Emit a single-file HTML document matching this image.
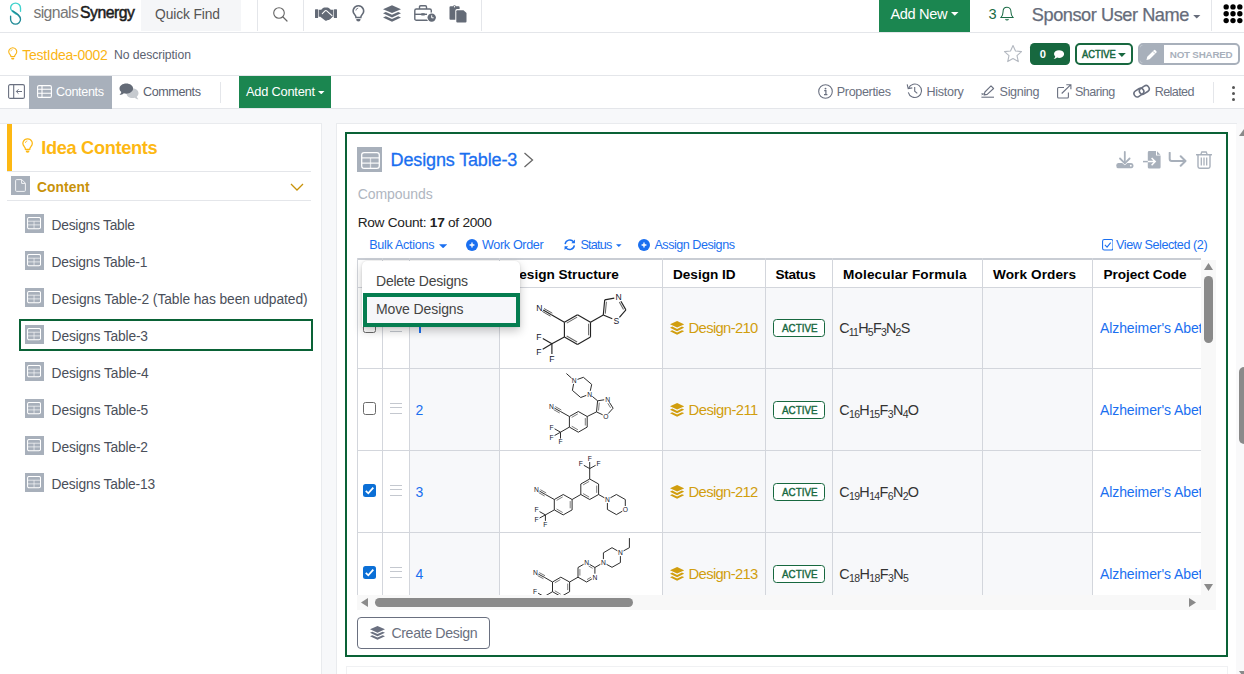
<!DOCTYPE html>
<html><head><meta charset="utf-8">
<style>
*{box-sizing:border-box;margin:0;padding:0}
html,body{width:1244px;height:674px;overflow:hidden;background:#f7f8fa;font-family:"Liberation Sans",sans-serif;color:#444;}
.abs{position:absolute}
.bar{position:absolute;left:0;width:1244px;background:#fff;border-bottom:1px solid #e4e6ea}
.vd{position:absolute;width:1px;background:#e4e6ea}
.t{position:absolute;white-space:nowrap;line-height:1}
.ibox{position:absolute;background:#a8b0bb}
#tbl{position:absolute;left:357px;top:258px;width:844px;height:337px;overflow:hidden;background:#fff}
.cv{position:absolute;top:0;width:1px;height:400px;background:#d3d6dc}
.rh{position:absolute;left:0;width:844px;height:1px;background:#d3d6dc}
.gc{position:absolute;background:#f7f8fa}
.act{position:absolute;width:52.5px;height:18px;border:1px solid #17683f;border-radius:3.5px;background:#fff}
.mf sub{font-size:10.5px;vertical-align:baseline;position:relative;top:2.6px}
.cb{position:absolute;width:13px;height:13px;border:1.3px solid #6b6b6b;border-radius:2.5px;background:#fff}
.cbc{position:absolute;width:13px;height:13px;border-radius:2.5px;background:#0b6fd6}
.hd{position:absolute;width:12.2px;height:10.5px;border-top:1.6px solid #c4c8cf;border-bottom:1.6px solid #c4c8cf}
.hd:after{content:"";position:absolute;left:0;top:2.85px;width:12.2px;height:1.6px;background:#c4c8cf}
</style></head><body>

<div class="bar" style="top:0;height:33px"></div>
<svg class="abs" style="left:9px;top:2px" width="14" height="24" viewBox="9 2 14 24" fill="none" stroke-width="1.35" stroke-linecap="round"><path d="M20.5 11.2 V8 A4.95 4.95 0 0 0 10.6 8 C10.6 10.5 12.5 11.8 16.2 14.3" stroke="#3fd2cd"/><path d="M12.6 10.9 C17.5 14 20.5 15.8 20.5 19.2 A4.95 4.95 0 0 1 10.6 19.2 V16.3" stroke="#1f8a96"/></svg>
<div class="t" style="left:33.5px;top:5.00px;font-size:15.8px;color:#777;font-weight:normal;letter-spacing:-0.648px;">signals</div>
<div class="t" style="left:80.1px;top:5.00px;font-size:15.8px;color:#1c1c1c;font-weight:normal;letter-spacing:-0.509px;-webkit-text-stroke:0.5px #1c1c1c;">Synergy</div>
<div class="abs" style="left:141px;top:0;width:100px;height:31px;background:#f5f6f8"></div>
<div class="t" style="left:155px;top:8.00px;font-size:13.8px;color:#555;font-weight:normal;letter-spacing:-0.106px;">Quick Find</div>
<div class="vd" style="left:257px;top:0;height:31px"></div>
<svg class="abs" style="left:272px;top:6px" width="17" height="17" viewBox="0 0 17 17"><circle cx="7" cy="7" r="5.3" fill="none" stroke="#666" stroke-width="1.1"/><path d="M11 11 L15 15" stroke="#666" stroke-width="1.2" stroke-linecap="round"/></svg>
<div class="vd" style="left:303px;top:0;height:31px"></div>
<svg class="abs" style="left:315px;top:6.5px" width="22" height="14" viewBox="0 0 22 14"><g fill="#646b77"><rect x="0" y="2.3" width="3.1" height="8.6" rx="0.5"/><rect x="18.9" y="2.3" width="3.1" height="8.6" rx="0.5"/><path d="M3.7 2.8 H6.2 L8 1 Q8.6 0.5 9.4 0.5 H12.6 Q13.3 0.5 13.9 0.9 L15.8 2.8 H18.3 V9.8 H17.2 Q17.3 11 16.2 11.1 Q16 12.3 14.7 12.2 Q14.2 13.4 12.8 13 Q11.3 14.3 9.8 13.2 L5.3 9.8 H3.7 Z"/></g><path d="M7.3 6.6 L10.3 3.7 Q11 3.2 11.7 3.8 L17 8.6" stroke="#fff" stroke-width="1.1" fill="none" stroke-linecap="round"/></svg>
<svg class="abs" style="left:352.3px;top:5px" width="12.8" height="17.8" viewBox="0 0 12 17"><path d="M6 0.8 A4.9 4.9 0 0 0 2.4 9.1 C3.2 10 3.7 10.9 3.7 12 H8.3 C8.3 10.9 8.8 10 9.6 9.1 A4.9 4.9 0 0 0 6 0.8 Z" fill="none" stroke="#646b77" stroke-width="1.5"/><path d="M3.9 13.4 H8.1 L7.6 15.3 Q6 16.2 4.4 15.3 Z" fill="#646b77"/><path d="M3.6 5.3 A2.5 2.5 0 0 1 5.8 3" fill="none" stroke="#646b77" stroke-width="0.8"/></svg>
<svg class="abs" style="left:383px;top:5px" width="18" height="17" viewBox="0 0 14 13"><g fill="#646b77"><path d="M7 0 L14 3.1 L7 6.2 L0 3.1 Z"/><path d="M2.2 5.3 L0 6.3 L7 9.6 L14 6.3 L11.8 5.3 L7 7.5 Z"/><path d="M2.2 8.6 L0 9.6 L7 12.9 L14 9.6 L11.8 8.6 L7 10.8 Z"/></g></svg>
<svg class="abs" style="left:414px;top:5px" width="23" height="18" viewBox="0 0 23 18"><g fill="none" stroke="#646b77" stroke-width="1.4"><path d="M5.5 4 V2 Q5.5 0.8 6.7 0.8 H11.3 Q12.5 0.8 12.5 2 V4"/><rect x="0.8" y="4" width="16.5" height="11.3" rx="1.6"/><path d="M0.8 9.3 H13"/></g><rect x="7.3" y="8.2" width="3.4" height="2.3" fill="#646b77"/><circle cx="17.7" cy="12.6" r="5" fill="#fff"/><circle cx="17.7" cy="12.6" r="4.2" fill="#646b77"/><path d="M17.7 10.3 V12.8 H19.6" stroke="#fff" stroke-width="1" fill="none"/></svg>
<svg class="abs" style="left:449px;top:5px" width="18" height="18" viewBox="0 0 18 18"><g fill="#646b77"><path d="M1.5 1.2 H4 A1.6 1.6 0 0 1 7 1.2 H9.6 Q10.6 1.2 10.6 2.2 V4 H8 Q6.3 4 6.3 5.7 V14.8 H1.5 Q0.5 14.8 0.5 13.8 V2.2 Q0.5 1.2 1.5 1.2 Z"/><path d="M8.3 5.2 H14.5 L17.5 8 V16.5 Q17.5 17.5 16.5 17.5 H8.3 Q7.3 17.5 7.3 16.5 V6.2 Q7.3 5.2 8.3 5.2 Z"/></g><circle cx="5.5" cy="1.7" r="0.7" fill="#fff"/></svg>
<div class="vd" style="left:481px;top:0;height:31px"></div>
<div class="abs" style="left:879px;top:0;width:91px;height:32px;background:#1b8650"></div>
<div class="t" style="left:890.4px;top:7.00px;font-size:14.6px;color:#fff;font-weight:normal;letter-spacing:-0.336px;">Add New</div>
<svg class="abs" style="left:951.2px;top:12px" width="7.5" height="3.8" viewBox="0 0 10 5"><path d="M0 0 H10 L5 5 Z" fill="#fff"/></svg>
<div class="t" style="left:988.6px;top:7.00px;font-size:14.6px;color:#1a6b45;font-weight:normal;letter-spacing:0.000px;">3</div>
<svg class="abs" style="left:1000px;top:6px" width="14" height="16" viewBox="0 0 15 17"><path d="M7.5 1.2 C4.3 1.2 3.2 3.8 3.2 6.5 C3.2 9.5 2.4 10.8 1 12.3 H14 C12.6 10.8 11.8 9.5 11.8 6.5 C11.8 3.8 10.7 1.2 7.5 1.2 Z" fill="none" stroke="#1a6b45" stroke-width="1.1"/><path d="M6 13.8 A1.6 1.6 0 0 0 9 13.8" fill="none" stroke="#1a6b45" stroke-width="1.1"/></svg>
<div class="t" style="left:1031.8px;top:6.00px;font-size:18.2px;color:#666c7a;font-weight:normal;letter-spacing:-0.454px;-webkit-text-stroke:0.25px #666c7a;">Sponsor User Name</div>
<svg class="abs" style="left:1193.2px;top:15px" width="7.5" height="3.6" viewBox="0 0 10 5"><path d="M0 0 H10 L5 5 Z" fill="#666c7a"/></svg>
<div class="vd" style="left:1211px;top:0;height:31px"></div>
<svg class="abs" style="left:1222.5px;top:4.3px" width="20" height="19.5" viewBox="0 0 20 20"><g fill="#000"><circle cx="3" cy="3" r="2.75"/><circle cx="3" cy="10" r="2.75"/><circle cx="3" cy="17" r="2.75"/><circle cx="10" cy="3" r="2.75"/><circle cx="10" cy="10" r="2.75"/><circle cx="10" cy="17" r="2.75"/><circle cx="17" cy="3" r="2.75"/><circle cx="17" cy="10" r="2.75"/><circle cx="17" cy="17" r="2.75"/></g></svg>
<div class="bar" style="top:33px;height:43px"></div>
<svg class="abs" style="left:8.4px;top:47px" width="9.5" height="13.6" viewBox="0 0 12 17"><path d="M6 0.8 A4.9 4.9 0 0 0 2.4 9.1 C3.2 10 3.7 10.9 3.7 12 H8.3 C8.3 10.9 8.8 10 9.6 9.1 A4.9 4.9 0 0 0 6 0.8 Z" fill="none" stroke="#fab516" stroke-width="1.4"/><path d="M3.9 13.4 H8.1 L7.6 15.3 Q6 16.2 4.4 15.3 Z" fill="#fab516"/><path d="M3.6 5.3 A2.5 2.5 0 0 1 5.8 3" fill="none" stroke="#fab516" stroke-width="0.8"/></svg>
<div class="t" style="left:22.3px;top:48.00px;font-size:14px;color:#fab516;font-weight:normal;letter-spacing:-0.278px;">TestIdea-0002</div>
<div class="t" style="left:114px;top:49.00px;font-size:12.2px;color:#5b6270;font-weight:normal;letter-spacing:-0.070px;">No description</div>
<svg class="abs" style="left:1003px;top:44px" width="20" height="19" viewBox="0 0 20 19"><path d="M10 1.5 L12.5 7 L18.5 7.6 L14 11.7 L15.3 17.6 L10 14.6 L4.7 17.6 L6 11.7 L1.5 7.6 L7.5 7 Z" fill="none" stroke="#b3b8c0" stroke-width="1.1" stroke-linejoin="round"/></svg>
<div class="abs" style="left:1030px;top:43px;width:40px;height:22px;background:#17683f;border-radius:4.5px"></div>
<div class="t" style="left:1039.8px;top:49.00px;font-size:11.2px;color:#fff;font-weight:bold;letter-spacing:0.000px;">0</div>
<svg class="abs" style="left:1052.5px;top:50px" width="11.5" height="9.5" viewBox="0 0 12 10"><path d="M6.3 0.3 C3.3 0.3 1 2 1 4.2 C1 5.2 1.5 6.1 2.3 6.8 C2.2 7.8 1.6 8.6 0.6 9.4 C2.2 9.4 3.4 8.9 4.2 8 C4.9 8.2 5.6 8.3 6.3 8.3 C9.3 8.3 11.6 6.5 11.6 4.2 C11.6 2 9.3 0.3 6.3 0.3 Z" fill="#fff"/></svg>
<div class="abs" style="left:1075px;top:43px;width:58px;height:22px;border:2px solid #17683f;border-radius:5px;background:#fff"></div>
<div class="t" style="left:1082.4px;top:50.00px;font-size:10.4px;color:#17683f;font-weight:normal;letter-spacing:0.000px;-webkit-text-stroke:0.5px #17683f;transform-origin:0 50%;transform:scaleX(0.9006)">ACTIVE</div>
<svg class="abs" style="left:1118.2px;top:52.5px" width="7.8" height="4" viewBox="0 0 10 5"><path d="M0 0 H10 L5 5 Z" fill="#17683f"/></svg>
<div class="abs" style="left:1138px;top:43px;width:102px;height:22px;border:2px solid #a8b0bb;border-radius:5px;background:#fff;overflow:hidden"><div class="abs" style="left:0;top:0;width:24px;height:18px;background:#a8b0bb"></div></div>
<svg class="abs" style="left:1145.5px;top:48.6px" width="11.5" height="11.5" viewBox="0 0 12 12"><path d="M0.5 11.5 L1.3 8.2 L8.2 1.3 Q9 0.5 9.8 1.3 L10.7 2.2 Q11.5 3 10.7 3.8 L3.8 10.7 Z" fill="#fff"/><path d="M7.2 2.4 L9.6 4.8" stroke="#a8b0bb" stroke-width="0.8"/></svg>
<div class="t" style="left:1169.8px;top:50.00px;font-size:9.8px;color:#a8b0bb;font-weight:bold;letter-spacing:-0.209px;">NOT SHARED</div>
<div class="bar" style="top:76px;height:33px"></div>
<svg class="abs" style="left:8px;top:84px" width="17" height="15" viewBox="0 0 17 15"><rect x="0.6" y="0.6" width="15.8" height="13.8" rx="1.5" fill="none" stroke="#6a7080" stroke-width="1.1"/><path d="M5.7 0.6 V14.4" stroke="#6a7080" stroke-width="1.1"/><path d="M14 7.5 H8.5 M10.5 5.3 L8.3 7.5 L10.5 9.7" fill="none" stroke="#6a7080" stroke-width="1"/></svg>
<div class="abs" style="left:29px;top:76px;width:83px;height:33px;background:#a8b0bb"></div>
<svg class="abs" style="left:37px;top:85px" width="15" height="13" viewBox="0 0 15 13"><rect x="0.6" y="0.6" width="13.8" height="11.8" rx="1.4" fill="none" stroke="#fff" stroke-width="1.1"/><path d="M0.6 4.3 H14.4 M0.6 8.3 H14.4 M5 0.6 V12.4" stroke="#fff" stroke-width="1.1" fill="none"/></svg>
<div class="t" style="left:56px;top:86.00px;font-size:12.6px;color:#fff;font-weight:normal;letter-spacing:-0.344px;">Contents</div>
<svg class="abs" style="left:119px;top:83px" width="20" height="17" viewBox="0 0 20 17"><path d="M13.5 5.5 C17 5.5 19.5 7.6 19.5 10.2 C19.5 11.6 18.8 12.7 17.8 13.5 C18 14.6 18.6 15.5 19.5 16.2 C17.8 16.2 16.5 15.6 15.6 14.7 C14.9 14.9 14.2 15 13.5 15 C10 15 7.5 12.9 7.5 10.2 C7.5 7.6 10 5.5 13.5 5.5 Z" fill="#c6cacf"/><path d="M7.3 0.5 C3.5 0.5 0.5 2.8 0.5 5.6 C0.5 7 1.2 8.2 2.3 9.1 C2.1 10.2 1.4 11.2 0.5 11.9 C2.4 11.9 3.8 11.3 4.8 10.3 C5.6 10.6 6.4 10.7 7.3 10.7 C11.1 10.7 14.1 8.4 14.1 5.6 C14.1 2.8 11.1 0.5 7.3 0.5 Z" fill="#646b77"/></svg>
<div class="t" style="left:143px;top:86.00px;font-size:12.6px;color:#5b6270;font-weight:normal;letter-spacing:-0.413px;">Comments</div>
<div class="vd" style="left:220px;top:82px;height:21px"></div>
<div class="abs" style="left:239px;top:76px;width:92px;height:32px;background:#1b8650"></div>
<div class="t" style="left:246px;top:86.00px;font-size:12.8px;color:#fff;font-weight:normal;letter-spacing:-0.216px;">Add Content</div>
<svg class="abs" style="left:318px;top:91px" width="6.5" height="3.4" viewBox="0 0 10 5"><path d="M0 0 H10 L5 5 Z" fill="#fff"/></svg>
<svg class="abs" style="left:818px;top:84px" width="15" height="15" viewBox="0 0 15 15"><circle cx="7.5" cy="7.5" r="6.8" fill="none" stroke="#6a7080" stroke-width="1.1"/><circle cx="7.5" cy="4.6" r="0.95" fill="#6a7080"/><path d="M6.2 6.7 H7.9 V10.5 M6 10.6 H9.4" stroke="#6a7080" stroke-width="1.2" fill="none"/></svg>
<div class="t" style="left:836.8px;top:86.00px;font-size:12.6px;color:#6a7080;font-weight:normal;letter-spacing:-0.356px;">Properties</div>
<svg class="abs" style="left:906px;top:83px" width="17" height="16" viewBox="0 0 17 16"><path d="M2.6 5.2 A6.7 6.7 0 1 1 2.3 9.3" fill="none" stroke="#6a7080" stroke-width="1.1"/><path d="M1.2 1.3 L2.2 5.6 L6.3 4.9" fill="none" stroke="#6a7080" stroke-width="1.1"/><path d="M8.7 4 V8.3 L11.3 10.4" fill="none" stroke="#6a7080" stroke-width="1.1"/></svg>
<div class="t" style="left:926.6px;top:86.00px;font-size:12.6px;color:#6a7080;font-weight:normal;letter-spacing:-0.331px;">History</div>
<svg class="abs" style="left:981px;top:85px" width="14" height="13" viewBox="0 0 14 13"><path d="M10 0.9 L12.6 3.5 L6.2 9.4 L3.2 9.9 L3.9 7 Z" fill="none" stroke="#6a7080" stroke-width="1.1" stroke-linejoin="round"/><path d="M0.4 12.2 H13" stroke="#6a7080" stroke-width="1.1"/><path d="M0.6 8 L2.6 10.2 M2.6 8 L0.6 10.2" stroke="#6a7080" stroke-width="0.9"/></svg>
<div class="t" style="left:999.6px;top:86.00px;font-size:12.6px;color:#6a7080;font-weight:normal;letter-spacing:-0.353px;">Signing</div>
<svg class="abs" style="left:1057px;top:84px" width="15" height="15" viewBox="0 0 15 15"><path d="M7 3.5 H1.6 Q0.6 3.5 0.6 4.5 V13 Q0.6 14 1.6 14 H10.4 Q11.4 14 11.4 13 V8.5" fill="none" stroke="#6a7080" stroke-width="1.1"/><path d="M4.7 9.5 L13.6 0.9 M9.3 0.7 H13.9 V5.3" fill="none" stroke="#6a7080" stroke-width="1.1"/></svg>
<div class="t" style="left:1075px;top:86.00px;font-size:12.6px;color:#6a7080;font-weight:normal;letter-spacing:-0.537px;">Sharing</div>
<svg class="abs" style="left:1132px;top:84px" width="19" height="15" viewBox="0 0 19 15"><g fill="none" stroke="#6a7080" stroke-width="1.6"><rect x="-4.6" y="-3" width="10.4" height="6.4" rx="3.2" transform="translate(6.3 8.7) rotate(-33)"/><rect x="-5.2" y="-3.2" width="10.4" height="6.4" rx="3.2" transform="translate(12.3 5.9) rotate(-33)"/></g></svg>
<div class="t" style="left:1154.8px;top:86.00px;font-size:12.6px;color:#6a7080;font-weight:normal;letter-spacing:-0.637px;">Related</div>
<div class="vd" style="left:1213px;top:82px;height:21px"></div>
<div class="abs" style="left:1232px;top:86px;width:3px;height:3px;border-radius:50%;background:#555"></div>
<div class="abs" style="left:1232px;top:92px;width:3px;height:3px;border-radius:50%;background:#555"></div>
<div class="abs" style="left:1232px;top:98px;width:3px;height:3px;border-radius:50%;background:#555"></div>
<div class="abs" style="left:0;top:123px;width:322px;height:560px;background:#fff;border:1px solid #e9ebee;border-left:none"></div>
<div class="abs" style="left:7px;top:124px;width:5px;height:47px;background:#fdb813"></div>
<svg class="abs" style="left:22.3px;top:137.6px" width="11.2" height="16" viewBox="0 0 12 17"><path d="M6 0.8 A4.9 4.9 0 0 0 2.4 9.1 C3.2 10 3.7 10.9 3.7 12 H8.3 C8.3 10.9 8.8 10 9.6 9.1 A4.9 4.9 0 0 0 6 0.8 Z" fill="none" stroke="#fdb813" stroke-width="1.35"/><path d="M3.9 13.4 H8.1 L7.6 15.3 Q6 16.2 4.4 15.3 Z" fill="#fdb813"/><path d="M3.6 5.3 A2.5 2.5 0 0 1 5.8 3" fill="none" stroke="#fdb813" stroke-width="0.8"/></svg>
<div class="t" style="left:41.3px;top:139.00px;font-size:18.2px;color:#fdb813;font-weight:bold;letter-spacing:-0.330px;">Idea Contents</div>
<div class="abs" style="left:7px;top:171px;width:304px;height:1px;background:#e4e6ea"></div>
<div class="ibox" style="left:11px;top:176px;width:19px;height:19px"><svg class="abs" style="left:4px;top:3px" width="11" height="13" viewBox="0 0 11 13"><path d="M1.6 0.6 H6.8 L10.4 4.2 V11.4 Q10.4 12.4 9.4 12.4 H1.6 Q0.6 12.4 0.6 11.4 V1.6 Q0.6 0.6 1.6 0.6 Z M6.6 0.8 V4.4 H10.2" fill="none" stroke="#f2f3f5" stroke-width="1"/></svg></div>
<div class="t" style="left:36.9px;top:181.00px;font-size:13.8px;color:#c8920a;font-weight:bold;letter-spacing:0.098px;">Content</div>
<svg class="abs" style="left:290px;top:183px" width="14" height="8" viewBox="0 0 14 8"><path d="M1 1 L7 7 L13 1" fill="none" stroke="#c8920a" stroke-width="1.3"/></svg>
<div class="abs" style="left:7px;top:200px;width:304px;height:1px;background:#e4e6ea"></div>
<div class="ibox" style="left:25px;top:214px;width:19px;height:19px"><svg class="abs" style="left:2px;top:3.1px" width="14.2" height="12.5" viewBox="0 0 15 13" preserveAspectRatio="none"><rect x="0.6" y="0.5" width="13.7" height="11.7" rx="1.6" fill="none" stroke="#fff" stroke-width="1.1"/><path d="M1 4.4 H14 M1 8.2 H14" stroke="#fff" stroke-opacity="0.75" stroke-width="0.9" fill="none"/><path d="M7.45 4.4 V12" stroke="#fff" stroke-opacity="0.6" stroke-width="1.1" fill="none"/></svg></div>
<div class="t" style="left:51.6px;top:219.00px;font-size:13.8px;color:#4a4f5a;font-weight:normal;letter-spacing:-0.252px;">Designs Table</div>
<div class="ibox" style="left:25px;top:251px;width:19px;height:19px"><svg class="abs" style="left:2px;top:3.1px" width="14.2" height="12.5" viewBox="0 0 15 13" preserveAspectRatio="none"><rect x="0.6" y="0.5" width="13.7" height="11.7" rx="1.6" fill="none" stroke="#fff" stroke-width="1.1"/><path d="M1 4.4 H14 M1 8.2 H14" stroke="#fff" stroke-opacity="0.75" stroke-width="0.9" fill="none"/><path d="M7.45 4.4 V12" stroke="#fff" stroke-opacity="0.6" stroke-width="1.1" fill="none"/></svg></div>
<div class="t" style="left:51.6px;top:256.00px;font-size:13.8px;color:#4a4f5a;font-weight:normal;letter-spacing:-0.206px;">Designs Table-1</div>
<div class="ibox" style="left:25px;top:288px;width:19px;height:19px"><svg class="abs" style="left:2px;top:3.1px" width="14.2" height="12.5" viewBox="0 0 15 13" preserveAspectRatio="none"><rect x="0.6" y="0.5" width="13.7" height="11.7" rx="1.6" fill="none" stroke="#fff" stroke-width="1.1"/><path d="M1 4.4 H14 M1 8.2 H14" stroke="#fff" stroke-opacity="0.75" stroke-width="0.9" fill="none"/><path d="M7.45 4.4 V12" stroke="#fff" stroke-opacity="0.6" stroke-width="1.1" fill="none"/></svg></div>
<div class="t" style="left:51.6px;top:293.00px;font-size:13.8px;color:#4a4f5a;font-weight:normal;letter-spacing:-0.077px;">Designs Table-2 (Table has been udpated)</div>
<div class="ibox" style="left:25px;top:325px;width:19px;height:19px"><svg class="abs" style="left:2px;top:3.1px" width="14.2" height="12.5" viewBox="0 0 15 13" preserveAspectRatio="none"><rect x="0.6" y="0.5" width="13.7" height="11.7" rx="1.6" fill="none" stroke="#fff" stroke-width="1.1"/><path d="M1 4.4 H14 M1 8.2 H14" stroke="#fff" stroke-opacity="0.75" stroke-width="0.9" fill="none"/><path d="M7.45 4.4 V12" stroke="#fff" stroke-opacity="0.6" stroke-width="1.1" fill="none"/></svg></div>
<div class="t" style="left:51.6px;top:330.00px;font-size:13.8px;color:#4a4f5a;font-weight:normal;letter-spacing:-0.163px;">Designs Table-3</div>
<div class="ibox" style="left:25px;top:362px;width:19px;height:19px"><svg class="abs" style="left:2px;top:3.1px" width="14.2" height="12.5" viewBox="0 0 15 13" preserveAspectRatio="none"><rect x="0.6" y="0.5" width="13.7" height="11.7" rx="1.6" fill="none" stroke="#fff" stroke-width="1.1"/><path d="M1 4.4 H14 M1 8.2 H14" stroke="#fff" stroke-opacity="0.75" stroke-width="0.9" fill="none"/><path d="M7.45 4.4 V12" stroke="#fff" stroke-opacity="0.6" stroke-width="1.1" fill="none"/></svg></div>
<div class="t" style="left:51.6px;top:367.00px;font-size:13.8px;color:#4a4f5a;font-weight:normal;letter-spacing:-0.121px;">Designs Table-4</div>
<div class="ibox" style="left:25px;top:399px;width:19px;height:19px"><svg class="abs" style="left:2px;top:3.1px" width="14.2" height="12.5" viewBox="0 0 15 13" preserveAspectRatio="none"><rect x="0.6" y="0.5" width="13.7" height="11.7" rx="1.6" fill="none" stroke="#fff" stroke-width="1.1"/><path d="M1 4.4 H14 M1 8.2 H14" stroke="#fff" stroke-opacity="0.75" stroke-width="0.9" fill="none"/><path d="M7.45 4.4 V12" stroke="#fff" stroke-opacity="0.6" stroke-width="1.1" fill="none"/></svg></div>
<div class="t" style="left:51.6px;top:404.00px;font-size:13.8px;color:#4a4f5a;font-weight:normal;letter-spacing:-0.142px;">Designs Table-5</div>
<div class="ibox" style="left:25px;top:436px;width:19px;height:19px"><svg class="abs" style="left:2px;top:3.1px" width="14.2" height="12.5" viewBox="0 0 15 13" preserveAspectRatio="none"><rect x="0.6" y="0.5" width="13.7" height="11.7" rx="1.6" fill="none" stroke="#fff" stroke-width="1.1"/><path d="M1 4.4 H14 M1 8.2 H14" stroke="#fff" stroke-opacity="0.75" stroke-width="0.9" fill="none"/><path d="M7.45 4.4 V12" stroke="#fff" stroke-opacity="0.6" stroke-width="1.1" fill="none"/></svg></div>
<div class="t" style="left:51.6px;top:441.00px;font-size:13.8px;color:#4a4f5a;font-weight:normal;letter-spacing:-0.163px;">Designs Table-2</div>
<div class="ibox" style="left:25px;top:473px;width:19px;height:19px"><svg class="abs" style="left:2px;top:3.1px" width="14.2" height="12.5" viewBox="0 0 15 13" preserveAspectRatio="none"><rect x="0.6" y="0.5" width="13.7" height="11.7" rx="1.6" fill="none" stroke="#fff" stroke-width="1.1"/><path d="M1 4.4 H14 M1 8.2 H14" stroke="#fff" stroke-opacity="0.75" stroke-width="0.9" fill="none"/><path d="M7.45 4.4 V12" stroke="#fff" stroke-opacity="0.6" stroke-width="1.1" fill="none"/></svg></div>
<div class="t" style="left:51.6px;top:478.00px;font-size:13.8px;color:#4a4f5a;font-weight:normal;letter-spacing:-0.184px;">Designs Table-13</div>
<div class="abs" style="left:19px;top:319px;width:294px;height:32px;border:2px solid #0a6236"></div>
<div class="abs" style="left:336px;top:123px;width:901px;height:560px;background:#fff;border:1px solid #e9ebee"></div>
<div class="abs" style="left:345px;top:132px;width:883px;height:525px;border:2px solid #0a6236;background:#fff"></div>
<div class="ibox" style="left:357px;top:147px;width:25px;height:25px"><svg class="abs" style="left:3.5px;top:4.5px" width="19" height="17" viewBox="0 0 19 17"><rect x="0.7" y="0.7" width="17.6" height="15.6" rx="2.4" fill="none" stroke="#fff" stroke-width="1.3"/><path d="M1 5.9 H18 M1 11.1 H18" stroke="#fff" stroke-opacity="0.9" stroke-width="1.1" fill="none"/><path d="M9.5 5.9 V16" stroke="#fff" stroke-opacity="0.65" stroke-width="1.3" fill="none"/></svg></div>
<div class="t" style="left:390.6px;top:151.00px;font-size:18px;color:#1a6ff0;font-weight:normal;letter-spacing:-0.146px;-webkit-text-stroke:0.3px #1a6ff0;">Designs Table-3</div>
<svg class="abs" style="left:523px;top:152px" width="11" height="16" viewBox="0 0 11 16"><path d="M1.5 1 L9.5 8 L1.5 15" fill="none" stroke="#666" stroke-width="1.3"/></svg>
<div class="t" style="left:357.7px;top:187.00px;font-size:14px;color:#b0b6bf;font-weight:normal;letter-spacing:-0.050px;">Compounds</div>
<div class="t" style="left:357.7px;top:216.00px;font-size:13.7px;color:#222;font-weight:normal;letter-spacing:-0.287px;">Row Count: <b>17</b> of 2000</div>
<svg class="abs" style="left:1116px;top:151px" width="18" height="18" viewBox="0 0 18 18"><g fill="none" stroke="#a8b0bb" stroke-width="1.8" stroke-linecap="round"><path d="M8.8 0.9 V12"/><path d="M4 7.5 L8.8 12.3 L13.6 7.5"/></g><path d="M2.3 12 H6.2 L8.8 14.3 L11.4 12 H15.3 Q17.5 12 17.5 14.6 Q17.5 17.3 15.3 17.3 H2.3 Q0.2 17.3 0.2 14.6 Q0.2 12 2.3 12 Z" fill="#a8b0bb"/><circle cx="14.8" cy="14.7" r="0.9" fill="#fff"/></svg>
<svg class="abs" style="left:1142px;top:151px" width="20" height="18" viewBox="0 0 20 18"><path d="M7.2 0 H14 V4.6 H18.6 V16.2 Q18.6 17.6 17.2 17.6 H7.2 Q5.8 17.6 5.8 16.2 V1.4 Q5.8 0 7.2 0 Z M15 0.2 L18.5 3.7 H15 Z" fill="#a8b0bb"/><path d="M1 10.6 H12.8 M9.6 7 L13.2 10.6 L9.6 14.2" fill="none" stroke="#fff" stroke-width="1.5"/><path d="M1 10.6 H5.8" stroke="#a8b0bb" stroke-width="1.5"/></svg>
<svg class="abs" style="left:1168px;top:152px" width="19" height="15" viewBox="0 0 19 15"><path d="M1.7 0.8 V7 Q1.7 9 3.7 9 H17.3 M12.7 4.2 L17.5 9 L12.7 13.8" fill="none" stroke="#a8b0bb" stroke-width="2" stroke-linecap="round" stroke-linejoin="round"/></svg>
<svg class="abs" style="left:1196px;top:151px" width="16" height="18" viewBox="0 0 16 18"><g fill="none" stroke="#a8b0bb"><path d="M0.5 3.7 H15.5" stroke-width="1.5" stroke-linecap="round"/><path d="M4.8 3.4 L5.8 1 H10.2 L11.2 3.4" stroke-width="1.3"/><path d="M2 4 V15.5 Q2 17.2 3.7 17.2 H12.3 Q14 17.2 14 15.5 V4" stroke-width="1.4"/><path d="M5.3 6.5 V14.5 M8 6.5 V14.5 M10.7 6.5 V14.5" stroke-width="1.3"/></g></svg>
<div class="t" style="left:369.2px;top:239.00px;font-size:12.6px;color:#1a6ff0;font-weight:normal;letter-spacing:-0.301px;">Bulk Actions</div>
<svg class="abs" style="left:439px;top:243.6px" width="8.2" height="4.5" viewBox="0 0 10 5"><path d="M0 0 H10 L5 5 Z" fill="#1a6ff0"/></svg>
<svg class="abs" style="left:466px;top:239px" width="12" height="12" viewBox="0 0 12 12"><circle cx="6" cy="6" r="6" fill="#1a6ff0"/><path d="M6 3.6 V8.4 M3.6 6 H8.4" stroke="#fff" stroke-width="1.35"/></svg>
<div class="t" style="left:482px;top:239.00px;font-size:12.6px;color:#1a6ff0;font-weight:normal;letter-spacing:-0.351px;">Work Order</div>
<svg class="abs" style="left:564.3px;top:239.4px" width="11.5" height="11.5" viewBox="0 0 12 12"><g fill="none" stroke="#1a6ff0" stroke-width="1.5"><path d="M1.2 5.3 A4.9 4.9 0 0 1 10 3"/><path d="M10.8 6.7 A4.9 4.9 0 0 1 2 9"/></g><path d="M11.4 0.6 V4.4 H7.6 Z M0.6 11.4 V7.6 H4.4 Z" fill="#1a6ff0"/></svg>
<div class="t" style="left:580.5px;top:239.00px;font-size:12.6px;color:#1a6ff0;font-weight:normal;letter-spacing:-0.801px;">Status</div>
<svg class="abs" style="left:616px;top:244px" width="5.6" height="3.2" viewBox="0 0 10 5"><path d="M0 0 H10 L5 5 Z" fill="#1a6ff0"/></svg>
<svg class="abs" style="left:638px;top:239px" width="12" height="12" viewBox="0 0 12 12"><circle cx="6" cy="6" r="6" fill="#1a6ff0"/><path d="M6 3.6 V8.4 M3.6 6 H8.4" stroke="#fff" stroke-width="1.35"/></svg>
<div class="t" style="left:654.4px;top:239.00px;font-size:12.6px;color:#1a6ff0;font-weight:normal;letter-spacing:-0.478px;">Assign Designs</div>
<svg class="abs" style="left:1101.6px;top:239.2px" width="11.6" height="11.6" viewBox="0 0 12 12"><rect x="0.6" y="0.6" width="10.8" height="10.8" rx="1.8" fill="none" stroke="#1a6ff0" stroke-width="1.1"/><path d="M3 6.2 L5.2 8.4 L9 3.8" fill="none" stroke="#1a6ff0" stroke-width="1.1"/></svg>
<div class="t" style="left:1116.1px;top:239.00px;font-size:12.6px;color:#1a6ff0;font-weight:normal;letter-spacing:-0.436px;">View Selected (2)</div>
<div id="tbl">
<div class="gc" style="left:53px;top:29px;width:89px;height:320px"></div>
<div class="gc" style="left:306px;top:29px;width:429px;height:320px"></div>
<div class="abs" style="left:0;top:0;width:844px;height:2px;background:#c9cdd4"></div>
<div class="cv" style="left:0"></div>
<div class="cv" style="left:25px"></div>
<div class="cv" style="left:52px"></div>
<div class="cv" style="left:142px"></div>
<div class="cv" style="left:305px"></div>
<div class="cv" style="left:408px"></div>
<div class="cv" style="left:475px"></div>
<div class="cv" style="left:625px"></div>
<div class="cv" style="left:735px"></div>
<div class="rh" style="top:29px"></div>
<div class="rh" style="top:110px"></div>
<div class="rh" style="top:192px"></div>
<div class="rh" style="top:274px"></div>
<div class="t" style="left:152.5px;top:10.00px;font-size:13.6px;color:#000;font-weight:bold;letter-spacing:-0.009px;">Design Structure</div>
<div class="t" style="left:316px;top:10.00px;font-size:13.6px;color:#000;font-weight:bold;letter-spacing:-0.013px;">Design ID</div>
<div class="t" style="left:418.5px;top:10.00px;font-size:13.6px;color:#000;font-weight:bold;letter-spacing:-0.269px;">Status</div>
<div class="t" style="left:486px;top:10.00px;font-size:13.6px;color:#000;font-weight:bold;letter-spacing:0.165px;">Molecular Formula</div>
<div class="t" style="left:636px;top:10.00px;font-size:13.6px;color:#000;font-weight:bold;letter-spacing:0.091px;">Work Orders</div>
<div class="t" style="left:746.5px;top:10.00px;font-size:13.6px;color:#000;font-weight:bold;letter-spacing:-0.069px;">Project Code</div>
<div class="cb" style="left:6px;top:62.25px"></div>
<div class="hd" style="left:33px;top:63.05000000000001px"></div>
<div class="abs" style="left:62px;top:64.60000000000002px;width:1.7px;height:10px;background:#1a6ff0"></div>
<svg class="abs" style="left:312.5px;top:63.44999999999999px" width="14.2" height="13.8" viewBox="0 0 14 13" preserveAspectRatio="none"><g fill="#d19e0e"><path d="M7 0 L14 3.1 L7 6.2 L0 3.1 Z"/><path d="M2.2 5.3 L0 6.3 L7 9.6 L14 6.3 L11.8 5.3 L7 7.5 Z"/><path d="M2.2 8.6 L0 9.6 L7 12.9 L14 9.6 L11.8 8.6 L7 10.8 Z"/></g></svg>
<div class="t" style="left:331.6px;top:63.00px;font-size:14.8px;color:#d19e0e;font-weight:normal;letter-spacing:-0.665px;">Design-210</div>
<div class="act" style="left:415.5px;top:60.75px"></div>
<div class="t" style="left:424.5px;top:66.00px;font-size:10.3px;color:#17683f;font-weight:normal;letter-spacing:0.000px;-webkit-text-stroke:0.4px #17683f;transform-origin:0 50%;transform:scaleX(0.9542)">ACTIVE</div>
<div class="t mf" style="left:482.20000000000005px;top:63.00px;font-size:14.4px;color:#333;font-weight:normal;letter-spacing:-0.774px;">C<sub>11</sub>H<sub>5</sub>F<sub>3</sub>N<sub>2</sub>S</div>
<div class="t" style="left:743px;top:63.00px;font-size:14px;color:#1a6ff0;font-weight:normal;letter-spacing:-0.090px;">Alzheimer's Abet</div>
<div class="cb" style="left:6px;top:144.25px"></div>
<div class="hd" style="left:33px;top:145.05px"></div>
<div class="t" style="left:58.5px;top:145.00px;font-size:14px;color:#1a6ff0;font-weight:normal;letter-spacing:0.000px;">2</div>
<svg class="abs" style="left:312.5px;top:145.45px" width="14.2" height="13.8" viewBox="0 0 14 13" preserveAspectRatio="none"><g fill="#d19e0e"><path d="M7 0 L14 3.1 L7 6.2 L0 3.1 Z"/><path d="M2.2 5.3 L0 6.3 L7 9.6 L14 6.3 L11.8 5.3 L7 7.5 Z"/><path d="M2.2 8.6 L0 9.6 L7 12.9 L14 9.6 L11.8 8.6 L7 10.8 Z"/></g></svg>
<div class="t" style="left:331.6px;top:145.00px;font-size:14.8px;color:#d19e0e;font-weight:normal;letter-spacing:-0.542px;">Design-211</div>
<div class="act" style="left:415.5px;top:142.75px"></div>
<div class="t" style="left:424.5px;top:148.00px;font-size:10.3px;color:#17683f;font-weight:normal;letter-spacing:0.000px;-webkit-text-stroke:0.4px #17683f;transform-origin:0 50%;transform:scaleX(0.9542)">ACTIVE</div>
<div class="t mf" style="left:482.20000000000005px;top:145.00px;font-size:14.4px;color:#333;font-weight:normal;letter-spacing:-0.638px;">C<sub>16</sub>H<sub>15</sub>F<sub>3</sub>N<sub>4</sub>O</div>
<div class="t" style="left:743px;top:145.00px;font-size:14px;color:#1a6ff0;font-weight:normal;letter-spacing:-0.090px;">Alzheimer's Abet</div>
<div class="cbc" style="left:6px;top:226.25px"><svg class="abs" style="left:0;top:0" width="13" height="13" viewBox="0 0 13 13"><path d="M2.8 6.8 L5.3 9.3 L10.3 3.6" fill="none" stroke="#fff" stroke-width="1.8"/></svg></div>
<div class="hd" style="left:33px;top:227.05px"></div>
<div class="t" style="left:58.5px;top:227.00px;font-size:14px;color:#1a6ff0;font-weight:normal;letter-spacing:0.000px;">3</div>
<svg class="abs" style="left:312.5px;top:227.45px" width="14.2" height="13.8" viewBox="0 0 14 13" preserveAspectRatio="none"><g fill="#d19e0e"><path d="M7 0 L14 3.1 L7 6.2 L0 3.1 Z"/><path d="M2.2 5.3 L0 6.3 L7 9.6 L14 6.3 L11.8 5.3 L7 7.5 Z"/><path d="M2.2 8.6 L0 9.6 L7 12.9 L14 9.6 L11.8 8.6 L7 10.8 Z"/></g></svg>
<div class="t" style="left:331.6px;top:227.00px;font-size:14.8px;color:#d19e0e;font-weight:normal;letter-spacing:-0.665px;">Design-212</div>
<div class="act" style="left:415.5px;top:224.75px"></div>
<div class="t" style="left:424.5px;top:230.00px;font-size:10.3px;color:#17683f;font-weight:normal;letter-spacing:0.000px;-webkit-text-stroke:0.4px #17683f;transform-origin:0 50%;transform:scaleX(0.9542)">ACTIVE</div>
<div class="t mf" style="left:482.20000000000005px;top:227.00px;font-size:14.4px;color:#333;font-weight:normal;letter-spacing:-0.638px;">C<sub>19</sub>H<sub>14</sub>F<sub>6</sub>N<sub>2</sub>O</div>
<div class="t" style="left:743px;top:227.00px;font-size:14px;color:#1a6ff0;font-weight:normal;letter-spacing:-0.090px;">Alzheimer's Abet</div>
<div class="cbc" style="left:6px;top:308.25px"><svg class="abs" style="left:0;top:0" width="13" height="13" viewBox="0 0 13 13"><path d="M2.8 6.8 L5.3 9.3 L10.3 3.6" fill="none" stroke="#fff" stroke-width="1.8"/></svg></div>
<div class="hd" style="left:33px;top:309.04999999999995px"></div>
<div class="t" style="left:58.5px;top:309.00px;font-size:14px;color:#1a6ff0;font-weight:normal;letter-spacing:0.000px;">4</div>
<svg class="abs" style="left:312.5px;top:309.45000000000005px" width="14.2" height="13.8" viewBox="0 0 14 13" preserveAspectRatio="none"><g fill="#d19e0e"><path d="M7 0 L14 3.1 L7 6.2 L0 3.1 Z"/><path d="M2.2 5.3 L0 6.3 L7 9.6 L14 6.3 L11.8 5.3 L7 7.5 Z"/><path d="M2.2 8.6 L0 9.6 L7 12.9 L14 9.6 L11.8 8.6 L7 10.8 Z"/></g></svg>
<div class="t" style="left:331.6px;top:309.00px;font-size:14.8px;color:#d19e0e;font-weight:normal;letter-spacing:-0.665px;">Design-213</div>
<div class="act" style="left:415.5px;top:306.75px"></div>
<div class="t" style="left:424.5px;top:312.00px;font-size:10.3px;color:#17683f;font-weight:normal;letter-spacing:0.000px;-webkit-text-stroke:0.4px #17683f;transform-origin:0 50%;transform:scaleX(0.9542)">ACTIVE</div>
<div class="t mf" style="left:482.20000000000005px;top:309.00px;font-size:14.4px;color:#333;font-weight:normal;letter-spacing:-0.598px;">C<sub>18</sub>H<sub>18</sub>F<sub>3</sub>N<sub>5</sub></div>
<div class="t" style="left:743px;top:309.00px;font-size:14px;color:#1a6ff0;font-weight:normal;letter-spacing:-0.090px;">Alzheimer's Abet</div>
<svg class="abs" style="left:0;top:0" width="844" height="337" viewBox="0 0 844 337" font-family="Liberation Sans, sans-serif" fill="none">
<path d="M207.4 64.2 L220.5 56.7" stroke="#222" stroke-width="1.15"/>
<path d="M209.7 65.1 L220.1 59.1" stroke="#666" stroke-width="1.035"/>
<path d="M220.5 56.7 L233.5 64.2" stroke="#222" stroke-width="1.15"/>
<path d="M233.5 64.2 L233.5 78.9" stroke="#222" stroke-width="1.15"/>
<path d="M231.6 65.8 L231.6 77.3" stroke="#666" stroke-width="1.035"/>
<path d="M233.5 78.9 L220.5 86.4" stroke="#222" stroke-width="1.15"/>
<path d="M220.5 86.4 L207.4 78.9" stroke="#222" stroke-width="1.15"/>
<path d="M220.1 84.0 L209.7 78.0" stroke="#666" stroke-width="1.035"/>
<path d="M207.4 78.9 L207.4 64.2" stroke="#222" stroke-width="1.15"/>
<path d="M207.4 64.2 L194.4 56.7" stroke="#222" stroke-width="1.15"/>
<path d="M194.4 56.7 L186.2 51.9" stroke="#222" stroke-width="1.15"/>
<path d="M195.3 55.2 L187.0 50.5" stroke="#555" stroke-width="0.9774999999999999"/>
<path d="M193.5 58.2 L185.3 53.4" stroke="#555" stroke-width="0.9774999999999999"/>
<path d="M207.4 78.9 L194.9 85.8" stroke="#222" stroke-width="1.15"/>
<path d="M194.9 85.8 L185.8 80.6" stroke="#222" stroke-width="1.15"/>
<path d="M194.9 85.8 L185.7 91.2" stroke="#222" stroke-width="1.15"/>
<path d="M194.9 85.8 L194.9 96.1" stroke="#222" stroke-width="1.15"/>
<path d="M233.5 64.2 L246.3 57.0" stroke="#222" stroke-width="1.15"/>
<path d="M246.3 57.0 L247.7 41.9" stroke="#222" stroke-width="1.15"/>
<path d="M248.3 55.6 L249.4 43.7" stroke="#666" stroke-width="1.035"/>
<path d="M247.7 41.9 L257.3 40.1" stroke="#222" stroke-width="1.15"/>
<path d="M263.9 43.2 L268.9 51.9" stroke="#222" stroke-width="1.15"/>
<path d="M262.3 44.1 L266.5 51.5" stroke="#666" stroke-width="1.035"/>
<path d="M268.9 51.9 L262.4 59.3" stroke="#222" stroke-width="1.15"/>
<path d="M255.3 60.8 L246.3 57.0" stroke="#222" stroke-width="1.15"/>
<text x="182.3" y="52.8" font-size="8.6" text-anchor="middle" fill="#15152a">N</text>
<text x="181.9" y="81.5" font-size="8.6" text-anchor="middle" fill="#15152a">F</text>
<text x="181.9" y="96.6" font-size="8.6" text-anchor="middle" fill="#15152a">F</text>
<text x="194.9" y="103.7" font-size="8.6" text-anchor="middle" fill="#15152a">F</text>
<text x="261.7" y="42.4" font-size="8.6" text-anchor="middle" fill="#15152a">N</text>
<text x="259.4" y="65.7" font-size="8.6" text-anchor="middle" fill="#15152a">S</text>
<path d="M212.4 158.5 L221.3 153.5" stroke="#222" stroke-width="0.95"/>
<path d="M214.7 159.4 L220.8 155.9" stroke="#666" stroke-width="0.855"/>
<path d="M221.3 153.5 L230.2 158.5" stroke="#222" stroke-width="0.95"/>
<path d="M230.2 158.5 L230.2 169.1" stroke="#222" stroke-width="0.95"/>
<path d="M228.3 160.1 L228.3 167.5" stroke="#666" stroke-width="0.855"/>
<path d="M230.2 169.1 L221.3 174.2" stroke="#222" stroke-width="0.95"/>
<path d="M221.3 174.2 L212.4 169.1" stroke="#222" stroke-width="0.95"/>
<path d="M220.9 171.8 L214.7 168.2" stroke="#666" stroke-width="0.855"/>
<path d="M212.4 169.1 L212.4 158.5" stroke="#222" stroke-width="0.95"/>
<path d="M212.4 158.5 L203.5 153.5" stroke="#222" stroke-width="0.95"/>
<path d="M203.5 153.5 L197.4 150.1" stroke="#222" stroke-width="0.95"/>
<path d="M204.3 152.0 L198.3 148.6" stroke="#555" stroke-width="0.8075"/>
<path d="M202.7 155.0 L196.6 151.6" stroke="#555" stroke-width="0.8075"/>
<path d="M212.4 169.1 L203.5 174.2" stroke="#222" stroke-width="0.95"/>
<path d="M203.5 174.2 L197.6 170.8" stroke="#222" stroke-width="0.95"/>
<path d="M203.5 174.2 L197.6 177.5" stroke="#222" stroke-width="0.95"/>
<path d="M203.5 174.2 L203.5 180.5" stroke="#222" stroke-width="0.95"/>
<path d="M230.2 158.5 L239.5 153.9" stroke="#222" stroke-width="0.95"/>
<path d="M239.5 153.9 L240.6 142.8" stroke="#222" stroke-width="0.95"/>
<path d="M241.5 152.5 L242.3 144.6" stroke="#666" stroke-width="0.855"/>
<path d="M240.6 142.8 L247.2 141.8" stroke="#222" stroke-width="0.95"/>
<path d="M252.4 144.3 L256.1 150.2" stroke="#222" stroke-width="0.95"/>
<path d="M250.8 145.3 L253.6 149.8" stroke="#666" stroke-width="0.855"/>
<path d="M256.1 150.2 L251.2 155.6" stroke="#222" stroke-width="0.95"/>
<path d="M245.7 156.8 L239.5 153.9" stroke="#222" stroke-width="0.95"/>
<path d="M240.6 142.8 L235.3 138.4" stroke="#222" stroke-width="0.95"/>
<path d="M233.3 132.8 L234.7 126.4" stroke="#222" stroke-width="0.95"/>
<path d="M234.7 126.4 L226.4 119.3" stroke="#222" stroke-width="0.95"/>
<path d="M226.4 119.3 L220.5 121.4" stroke="#222" stroke-width="0.95"/>
<path d="M216.6 125.9 L215.4 132.4" stroke="#222" stroke-width="0.95"/>
<path d="M215.4 132.4 L223.7 139.5" stroke="#222" stroke-width="0.95"/>
<path d="M223.7 139.5 L229.3 137.4" stroke="#222" stroke-width="0.95"/>
<path d="M214.6 120.2 L209.4 115.5" stroke="#222" stroke-width="0.95"/>
<text x="194.4" y="150.8" font-size="6.7" text-anchor="middle" fill="#15152a">N</text>
<text x="194.6" y="171.5" font-size="6.7" text-anchor="middle" fill="#15152a">F</text>
<text x="194.6" y="181.6" font-size="6.7" text-anchor="middle" fill="#15152a">F</text>
<text x="203.5" y="186.4" font-size="6.7" text-anchor="middle" fill="#15152a">F</text>
<text x="250.6" y="143.7" font-size="6.7" text-anchor="middle" fill="#15152a">N</text>
<text x="248.9" y="160.6" font-size="6.7" text-anchor="middle" fill="#15152a">O</text>
<text x="232.6" y="138.6" font-size="6.7" text-anchor="middle" fill="#15152a">N</text>
<text x="217.2" y="124.9" font-size="6.7" text-anchor="middle" fill="#15152a">N</text>
<path d="M197.3 241.5 L206.2 236.5" stroke="#222" stroke-width="0.95"/>
<path d="M199.6 242.4 L205.7 238.9" stroke="#666" stroke-width="0.855"/>
<path d="M206.2 236.5 L215.1 241.5" stroke="#222" stroke-width="0.95"/>
<path d="M215.1 241.5 L215.1 251.9" stroke="#222" stroke-width="0.95"/>
<path d="M213.2 243.1 L213.2 250.3" stroke="#666" stroke-width="0.855"/>
<path d="M215.1 251.9 L206.2 256.9" stroke="#222" stroke-width="0.95"/>
<path d="M206.2 256.9 L197.3 251.9" stroke="#222" stroke-width="0.95"/>
<path d="M205.7 254.5 L199.6 251.0" stroke="#666" stroke-width="0.855"/>
<path d="M197.3 251.9 L197.3 241.5" stroke="#222" stroke-width="0.95"/>
<path d="M197.3 241.5 L188.4 236.5" stroke="#222" stroke-width="0.95"/>
<path d="M188.4 236.5 L182.5 233.1" stroke="#222" stroke-width="0.95"/>
<path d="M189.2 235.0 L183.4 231.7" stroke="#555" stroke-width="0.8075"/>
<path d="M187.6 238.0 L181.7 234.6" stroke="#555" stroke-width="0.8075"/>
<path d="M197.3 251.9 L188.4 256.9" stroke="#222" stroke-width="0.95"/>
<path d="M188.4 256.9 L182.5 253.6" stroke="#222" stroke-width="0.95"/>
<path d="M188.4 256.9 L182.6 260.0" stroke="#222" stroke-width="0.95"/>
<path d="M188.4 256.9 L188.4 262.9" stroke="#222" stroke-width="0.95"/>
<path d="M215.1 241.5 L223.8 236.5" stroke="#222" stroke-width="0.95"/>
<path d="M223.8 236.5 L223.8 226.0" stroke="#222" stroke-width="0.95"/>
<path d="M223.8 226.0 L232.7 221.0" stroke="#222" stroke-width="0.95"/>
<path d="M226.1 226.9 L232.2 223.4" stroke="#666" stroke-width="0.855"/>
<path d="M232.7 221.0 L241.6 226.0" stroke="#222" stroke-width="0.95"/>
<path d="M241.6 226.0 L241.6 236.5" stroke="#222" stroke-width="0.95"/>
<path d="M239.7 227.6 L239.7 234.9" stroke="#666" stroke-width="0.855"/>
<path d="M241.6 236.5 L232.7 241.5" stroke="#222" stroke-width="0.95"/>
<path d="M232.7 241.5 L223.8 236.5" stroke="#222" stroke-width="0.95"/>
<path d="M232.2 239.1 L226.1 235.6" stroke="#666" stroke-width="0.855"/>
<path d="M232.7 221.0 L232.7 210.6" stroke="#222" stroke-width="0.95"/>
<path d="M232.7 210.6 L226.8 207.3" stroke="#222" stroke-width="0.95"/>
<path d="M232.7 210.6 L232.7 204.0" stroke="#222" stroke-width="0.95"/>
<path d="M232.7 210.6 L238.6 207.3" stroke="#222" stroke-width="0.95"/>
<path d="M241.6 236.5 L247.4 239.8" stroke="#222" stroke-width="0.95"/>
<path d="M253.4 239.8 L259.4 236.5" stroke="#222" stroke-width="0.95"/>
<path d="M259.4 236.5 L268.3 241.5" stroke="#222" stroke-width="0.95"/>
<path d="M268.3 241.5 L268.3 248.0" stroke="#222" stroke-width="0.95"/>
<path d="M265.3 253.2 L259.4 256.6" stroke="#222" stroke-width="0.95"/>
<path d="M259.4 256.6 L250.4 251.5" stroke="#222" stroke-width="0.95"/>
<path d="M250.4 251.5 L250.4 245.0" stroke="#222" stroke-width="0.95"/>
<text x="179.5" y="233.8" font-size="6.7" text-anchor="middle" fill="#15152a">N</text>
<text x="179.5" y="254.3" font-size="6.7" text-anchor="middle" fill="#15152a">F</text>
<text x="179.5" y="264.0" font-size="6.7" text-anchor="middle" fill="#15152a">F</text>
<text x="188.4" y="268.8" font-size="6.7" text-anchor="middle" fill="#15152a">F</text>
<text x="223.8" y="208.0" font-size="6.7" text-anchor="middle" fill="#15152a">F</text>
<text x="232.7" y="202.9" font-size="6.7" text-anchor="middle" fill="#15152a">F</text>
<text x="241.6" y="208.0" font-size="6.7" text-anchor="middle" fill="#15152a">F</text>
<text x="250.4" y="243.9" font-size="6.7" text-anchor="middle" fill="#15152a">N</text>
<text x="268.3" y="253.9" font-size="6.7" text-anchor="middle" fill="#15152a">O</text>
<path d="M195.5 324.0 L203.8 319.2" stroke="#222" stroke-width="0.95"/>
<path d="M197.8 324.8 L203.4 321.6" stroke="#666" stroke-width="0.855"/>
<path d="M203.8 319.2 L212.6 324.0" stroke="#222" stroke-width="0.95"/>
<path d="M212.6 324.0 L212.6 333.7" stroke="#222" stroke-width="0.95"/>
<path d="M210.7 325.6 L210.7 332.1" stroke="#666" stroke-width="0.855"/>
<path d="M212.6 333.7 L204.1 338.6" stroke="#222" stroke-width="0.95"/>
<path d="M204.1 338.6 L195.5 333.7" stroke="#222" stroke-width="0.95"/>
<path d="M203.7 336.2 L197.8 332.8" stroke="#666" stroke-width="0.855"/>
<path d="M195.5 333.7 L195.5 324.0" stroke="#222" stroke-width="0.95"/>
<path d="M195.5 324.0 L187.2 319.2" stroke="#222" stroke-width="0.95"/>
<path d="M187.2 319.2 L181.4 316.1" stroke="#222" stroke-width="0.95"/>
<path d="M188.0 317.7 L182.2 314.6" stroke="#555" stroke-width="0.8075"/>
<path d="M186.4 320.7 L180.6 317.6" stroke="#555" stroke-width="0.8075"/>
<path d="M195.5 333.7 L187.2 338.6" stroke="#222" stroke-width="0.95"/>
<path d="M187.2 338.6 L181.1 335.2" stroke="#222" stroke-width="0.95"/>
<path d="M187.2 338.6 L181.2 341.8" stroke="#222" stroke-width="0.95"/>
<path d="M187.2 338.6 L187.2 344.5" stroke="#222" stroke-width="0.95"/>
<path d="M212.6 324.0 L221.0 319.2" stroke="#222" stroke-width="0.95"/>
<path d="M221.0 319.2 L221.0 309.5" stroke="#222" stroke-width="0.95"/>
<path d="M222.9 317.6 L222.9 311.1" stroke="#666" stroke-width="0.855"/>
<path d="M221.0 309.5 L226.6 306.3" stroke="#222" stroke-width="0.95"/>
<path d="M232.6 306.4 L237.9 309.5" stroke="#222" stroke-width="0.95"/>
<path d="M231.6 308.0 L235.6 310.3" stroke="#666" stroke-width="0.855"/>
<path d="M237.9 309.5 L237.9 315.7" stroke="#222" stroke-width="0.95"/>
<path d="M234.9 320.9 L229.6 324.0" stroke="#222" stroke-width="0.95"/>
<path d="M233.9 319.3 L230.0 321.6" stroke="#666" stroke-width="0.855"/>
<path d="M229.6 324.0 L221.0 319.2" stroke="#222" stroke-width="0.95"/>
<path d="M237.9 309.5 L243.4 306.3" stroke="#222" stroke-width="0.95"/>
<path d="M246.4 301.1 L246.4 294.8" stroke="#222" stroke-width="0.95"/>
<path d="M246.4 294.8 L255.0 289.7" stroke="#222" stroke-width="0.95"/>
<path d="M255.0 289.7 L260.4 292.8" stroke="#222" stroke-width="0.95"/>
<path d="M263.4 298.1 L263.4 304.6" stroke="#222" stroke-width="0.95"/>
<path d="M263.4 304.6 L255.0 309.3" stroke="#222" stroke-width="0.95"/>
<path d="M255.0 309.3 L249.5 306.3" stroke="#222" stroke-width="0.95"/>
<path d="M266.5 292.9 L272.4 289.7" stroke="#222" stroke-width="0.95"/>
<path d="M272.4 289.7 L272.4 280.1" stroke="#222" stroke-width="0.95"/>
<text x="178.3" y="316.8" font-size="6.7" text-anchor="middle" fill="#15152a">N</text>
<text x="178.1" y="335.9" font-size="6.7" text-anchor="middle" fill="#15152a">F</text>
<text x="178.1" y="345.9" font-size="6.7" text-anchor="middle" fill="#15152a">F</text>
<text x="187.2" y="350.4" font-size="6.7" text-anchor="middle" fill="#15152a">F</text>
<text x="229.6" y="307.0" font-size="6.7" text-anchor="middle" fill="#15152a">N</text>
<text x="237.9" y="321.6" font-size="6.7" text-anchor="middle" fill="#15152a">N</text>
<text x="246.4" y="307.0" font-size="6.7" text-anchor="middle" fill="#15152a">N</text>
<text x="263.4" y="297.0" font-size="6.7" text-anchor="middle" fill="#15152a">N</text>
</svg>
</div>
<div class="abs" style="left:1201px;top:260px;width:15px;height:335px;background:#f8f8f8"></div>
<svg class="abs" style="left:1204px;top:263px" width="9" height="7" viewBox="0 0 9 7"><path d="M0 7 L4.5 0 L9 7 Z" fill="#8a8a8a"/></svg>
<div class="abs" style="left:1204px;top:276px;width:9px;height:66.5px;border-radius:4.5px;background:#8a8a8a"></div>
<svg class="abs" style="left:1204px;top:584px" width="9" height="7" viewBox="0 0 9 7"><path d="M0 0 L4.5 7 L9 0 Z" fill="#8a8a8a"/></svg>
<div class="abs" style="left:357px;top:595px;width:859px;height:15px;background:#f8f8f8"></div>
<svg class="abs" style="left:361px;top:598px" width="7" height="9" viewBox="0 0 7 9"><path d="M7 0 L0 4.5 L7 9 Z" fill="#8a8a8a"/></svg>
<div class="abs" style="left:375px;top:598px;width:258px;height:9px;border-radius:4.5px;background:#8a8a8a"></div>
<svg class="abs" style="left:1189px;top:598px" width="7" height="9" viewBox="0 0 7 9"><path d="M0 0 L7 4.5 L0 9 Z" fill="#8a8a8a"/></svg>
<div class="abs" style="left:357px;top:617px;width:133px;height:32px;border:1px solid #6a7080;border-radius:4px;background:#fff"></div>
<svg class="abs" style="left:369.5px;top:626px" width="15" height="14" viewBox="0 0 14 13"><g fill="#6a7080"><path d="M7 0 L14 3.1 L7 6.2 L0 3.1 Z"/><path d="M2.2 5.3 L0 6.3 L7 9.6 L14 6.3 L11.8 5.3 L7 7.5 Z"/><path d="M2.2 8.6 L0 9.6 L7 12.9 L14 9.6 L11.8 8.6 L7 10.8 Z"/></g></svg>
<div class="t" style="left:391.4px;top:626.00px;font-size:14.2px;color:#6a7080;font-weight:normal;letter-spacing:-0.375px;">Create Design</div>
<div class="abs" style="left:362px;top:261px;width:158px;height:66px;background:#fff;border-radius:5px 5px 0 0;box-shadow:0 4px 10px rgba(0,0,0,0.22),0 0 2px rgba(0,0,0,0.12)"></div>
<div class="t" style="left:376px;top:274.00px;font-size:14px;color:#444;font-weight:normal;letter-spacing:-0.226px;">Delete Designs</div>
<div class="abs" style="left:363px;top:293px;width:157px;height:34px;border:4px solid #057d50;background:#f6f7fa"></div>
<div class="t" style="left:376px;top:302.00px;font-size:14px;color:#444;font-weight:normal;letter-spacing:-0.109px;">Move Designs</div>
<div class="abs" style="left:346px;top:666px;width:882px;height:20px;border:1px solid #f0f1f3;background:#fff"></div>
<div class="abs" style="left:1236px;top:124px;width:8px;height:560px;background:#f9f9fa"></div>
<svg class="abs" style="left:1239px;top:129px" width="10" height="7" viewBox="0 0 10 7"><path d="M0 7 L5 0 L10 7 Z" fill="#8a8a8a"/></svg>
<div class="abs" style="left:1239px;top:367px;width:10px;height:77px;border-radius:5px;background:#8a8a8a"></div>
<svg class="abs" style="left:1239px;top:671px" width="10" height="7" viewBox="0 0 10 7"><path d="M0 0 L5 7 L10 0 Z" fill="#8a8a8a"/></svg>
</body></html>
